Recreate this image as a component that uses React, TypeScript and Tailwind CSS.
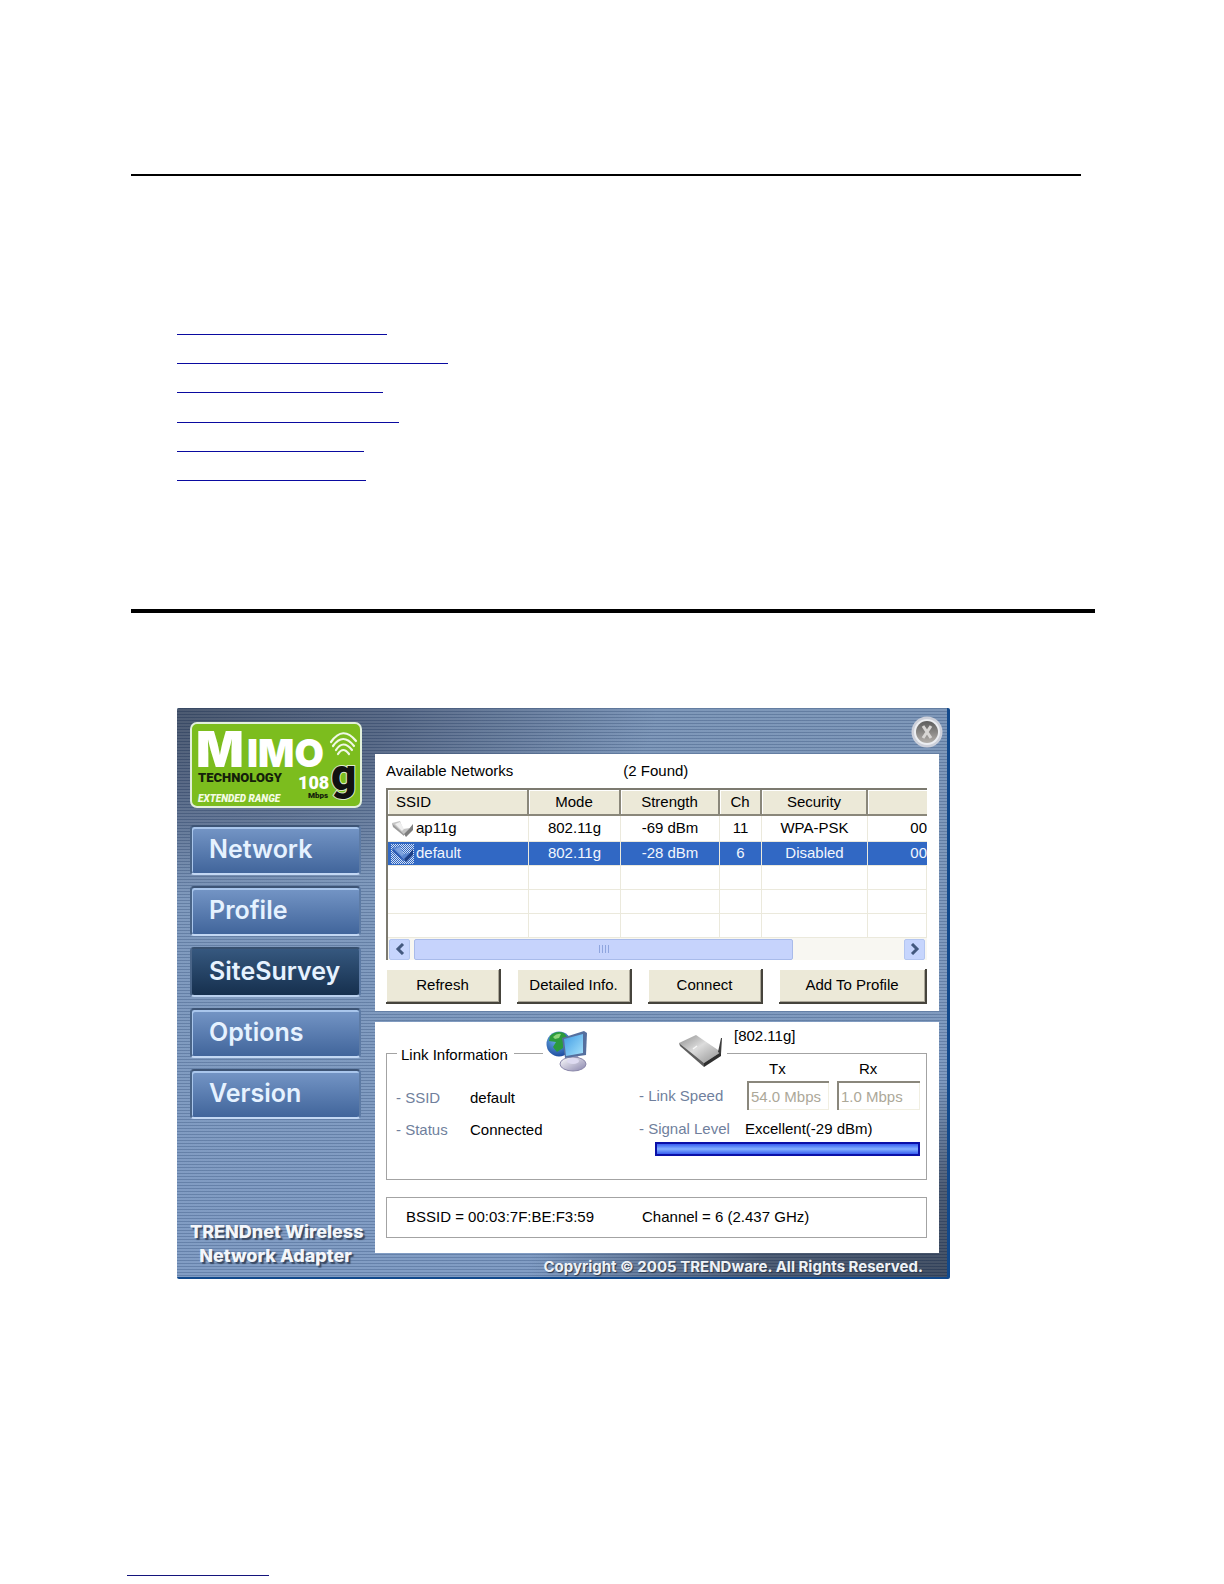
import React from "react";

const linkRows = [
  "w-[210px] h-[29px]",
  "w-[271px] h-[29px]",
  "w-[206px] h-[29px]",
  "w-[222px] h-[30px]",
  "w-[187px] h-[29px]",
  "w-[189px] h-[29px]",
];

const navItems = ["Network", "Profile", "SiteSurvey", "Options", "Version"];

const networks = [
  { ssid: "ap11g", mode: "802.11g", strength: "-69 dBm", ch: "11", security: "WPA-PSK", bssid: "00" },
  { ssid: "default", mode: "802.11g", strength: "-28 dBm", ch: "6", security: "Disabled", bssid: "00" },
];

function MimoLogo() {
  return (
    <svg viewBox="0 0 172 86" className="block h-[86px] w-[172px]" role="img" aria-label="MIMO Technology 108 Mbps g">
      <rect x="1" y="1" width="170" height="84" rx="6" fill="#7cbd1e" stroke="#e3f0dc" strokeWidth="2" />
      <g fontFamily="Inter, sans-serif" fontWeight="900" fill="#ffffff">
        <text x="6" y="45" fontSize="50">M</text>
        <text x="57" y="45" fontSize="38">IMO</text>
      </g>
      <g fontFamily="Roboto, sans-serif" fontWeight="900">
        <text x="8" y="60" fontSize="13" fill="#14200a">TECHNOLOGY</text>
        <text x="108" y="67" fontSize="18" fill="#ffffff">108</text>
        <text x="118" y="76" fontSize="8" fill="#14200a">Mbps</text>
        <text x="141" y="68" fontSize="44" fill="#111111" stroke="#dcebc8" strokeWidth="2" paintOrder="stroke">g</text>
      </g>
      <text x="8" y="80" fontFamily="Roboto, sans-serif" fontSize="10" fontWeight="900" fontStyle="italic" fill="#f4fbe4">
        EXTENDED RANGE
      </text>
      <g fill="none" stroke="#f1f8e6" strokeWidth="2.2" strokeLinecap="round">
        <path d="M141 20 Q153 3 166 19" />
        <path d="M143 24 Q153 10 164 24" />
        <path d="M146 28 Q153 17 162 28" />
        <path d="M148 32 Q153 24 159 32" />
      </g>
    </svg>
  );
}

function CardIcon({ selected }: { selected?: boolean }) {
  return (
    <svg viewBox="0 0 24 20" className="h-5 w-6 flex-none" aria-hidden="true">
      {selected && (
        <>
          <defs>
            <pattern id="dither" width="2" height="2" patternUnits="userSpaceOnUse">
              <rect width="2" height="2" fill="#3168c4" />
              <rect width="1" height="1" fill="#d5e0f2" />
              <rect x="1" y="1" width="1" height="1" fill="#d5e0f2" />
            </pattern>
          </defs>
          <rect width="23" height="20" fill="url(#dither)" />
        </>
      )}
      <path d="M1 4 L9 2 L12 10 L19 9 L14 16 Z" fill={selected ? "#5a86d0" : "#c4c4c4"} />
      <path d="M4 5 L9 3 L13 10 L11 12 Z" fill={selected ? "#7da2de" : "#efefef"} />
      <path d="M1 4 L13 15 L13 17 L2 8 Z" fill={selected ? "#2f5cb4" : "#9a9a9a"} />
      <path d="M13 15 L18 10 L22 5 L22 11 L15 18 Z" fill={selected ? "#1d3f86" : "#7d7d7d"} />
    </svg>
  );
}

function ComputerIcon() {
  return (
    <svg viewBox="0 0 42 42" className="h-[42px] w-[42px]" aria-hidden="true">
      <defs>
        <radialGradient id="globe" cx="0.4" cy="0.3" r="0.8">
          <stop offset="0" stopColor="#6fb6ea" />
          <stop offset="1" stopColor="#143f96" />
        </radialGradient>
        <linearGradient id="screen" x1="0" y1="0" x2="1" y2="1">
          <stop offset="0" stopColor="#3f9be4" />
          <stop offset="1" stopColor="#a6e2fb" />
        </linearGradient>
        <linearGradient id="stand" x1="0" y1="0" x2="1" y2="1">
          <stop offset="0" stopColor="#ffffff" />
          <stop offset="1" stopColor="#8884ac" />
        </linearGradient>
      </defs>
      <circle cx="13" cy="14" r="12.5" fill="url(#globe)" />
      <path d="M4 6 Q10 0 18 3 L22 8 L17 11 L17 18 L11 22 L7 17 L10 12 L3 11 Z" fill="#2c9a3c" />
      <path d="M7 7 Q11 3 15 4 L13 8 L9 9 Z" fill="#8ed47b" />
      <path d="M23 26 L32 26 L34 33 L20 33 Z" fill="#aaa7c8" />
      <ellipse cx="27" cy="34" rx="13" ry="7" fill="url(#stand)" stroke="#8b88aa" strokeWidth="1" />
      <ellipse cx="27" cy="31" rx="6" ry="3" fill="#dddaf0" />
      <path d="M16 8 L38 1 L41 3 L40 25 L19 28 Z" fill="#556f9e" />
      <path d="M18 9 L37 4 L37 23 L20 26 Z" fill="url(#screen)" />
    </svg>
  );
}

function RouterIcon() {
  return (
    <svg viewBox="0 0 46 34" className="h-[34px] w-[46px]" aria-hidden="true">
      <defs>
        <linearGradient id="case" x1="0" y1="0" x2="1" y2="1">
          <stop offset="0" stopColor="#8e8e8e" />
          <stop offset="0.45" stopColor="#dcdcdc" />
          <stop offset="1" stopColor="#8f8f8f" />
        </linearGradient>
      </defs>
      <path d="M1 9 L18 1 L43 18 L26 29 Z" fill="url(#case)" />
      <path d="M1 9 L26 29 L26 33 L2 12 Z" fill="#5e5e5e" />
      <path d="M26 29 L43 18 L43 22 L26 33 Z" fill="#2f2f2f" />
      <path d="M43 4 L44 4 L43 20 L40 18 Z" fill="#3c3c3c" />
      <path d="M15 15 L19 12" stroke="#f6f6f6" strokeWidth="1.5" />
    </svg>
  );
}

function GrayButton({ label, className }: { label: string; className: string }) {
  return (
    <button
      type="button"
      className={`h-[35px] border-r-2 border-b-2 border-[#46443c] bg-[#ece9d8] text-center shadow-[inset_1px_1px_0_#ffffff,inset_-1px_-1px_0_#aca899] ${className}`}
    >
      {label}
    </button>
  );
}

function ScrollArrow({ direction }: { direction: "left" | "right" }) {
  return (
    <button
      type="button"
      aria-label={`Scroll ${direction}`}
      className="flex h-[21px] w-[21px] flex-none items-center justify-center rounded-xs border border-[#b4c6f0] bg-[#c6d5fd]"
    >
      <svg viewBox="0 0 10 12" className="h-3 w-[10px]" aria-hidden="true">
        <path d={direction === "left" ? "M8 1 L3 6 L8 11" : "M2 1 L7 6 L2 11"} fill="none" stroke="#43597f" strokeWidth="3" />
      </svg>
    </button>
  );
}

function NetworkTable() {
  const head =
    "h-[26px] border-r-2 border-b-2 border-[#8a877a] bg-[#ece9d8] font-normal shadow-[inset_1px_1px_0_#ffffff]";
  const cell = "border-r border-b border-[#ebe9dc] text-center";
  return (
    <div className="mt-[7px] overflow-hidden border-t-2 border-l-2 border-[#7c7a70]">
      <table className="w-full table-fixed border-separate border-spacing-0">
        <colgroup>
          <col className="w-[141px]" />
          <col className="w-[92px]" />
          <col className="w-[99px]" />
          <col className="w-[42px]" />
          <col className="w-[106px]" />
          <col />
        </colgroup>
        <thead>
          <tr>
            <th className={`${head} pl-2 text-left`}>SSID</th>
            <th className={head}>Mode</th>
            <th className={head}>Strength</th>
            <th className={head}>Ch</th>
            <th className={head}>Security</th>
            <th className="h-[26px] border-b-2 border-[#8a877a] bg-[#ece9d8] shadow-[inset_1px_1px_0_#ffffff]" />
          </tr>
        </thead>
        <tbody>
          {networks.map((n, i) => (
            <tr key={n.ssid} className={i === 1 ? "h-6 bg-[#3168c4] text-[#f2f6fd]" : "h-[26px]"}>
              <td className="border-r border-b border-[#ebe9dc]">
                <span className="flex h-[23px] items-center gap-[1px] pl-[3px]">
                  <CardIcon selected={i === 1} />
                  {n.ssid}
                </span>
              </td>
              <td className={cell}>{n.mode}</td>
              <td className={cell}>{n.strength}</td>
              <td className={cell}>{n.ch}</td>
              <td className={cell}>{n.security}</td>
              <td className="border-b border-[#ebe9dc] text-right">{n.bssid}</td>
            </tr>
          ))}
          {[0, 1, 2].map((r) => (
            <tr key={r}>
              {[0, 1, 2, 3, 4, 5].map((c) => (
                <td key={c} className="h-6 border-r border-b border-[#ebe9dc]" />
              ))}
            </tr>
          ))}
        </tbody>
      </table>
      <div className="flex h-[22px] items-center gap-1 bg-[#f8f7f2] pr-[2px] pl-[1px]">
        <ScrollArrow direction="left" />
        <div className="flex-1">
          <div className="flex h-[21px] w-[78%] items-center justify-center gap-[2px] rounded-xs border border-[#a9bbea] bg-[#c6d3fc]">
            {[0, 1, 2, 3].map((k) => (
              <span key={k} className="h-2 w-px bg-[#8fa5de]" />
            ))}
          </div>
        </div>
        <ScrollArrow direction="right" />
      </div>
    </div>
  );
}

function LinkInformation() {
  const field =
    "h-[29px] w-full border-t-2 border-l-2 border-[#8a877c] bg-white pl-[2px] text-[#aca899] shadow-[inset_-1px_-1px_0_#f1efe2]";
  return (
    <section className="relative flex h-[127px] justify-between border border-[#a3a3a3]">
      <h2 className="absolute -top-[9px] left-[10px] bg-white px-1 leading-5">Link Information</h2>
      <div className="absolute top-0 left-[119px] -mt-px h-px w-2 bg-white" />
      <div className="absolute -top-6 left-[156px] flex w-[184px] items-center justify-between bg-white px-[3px]">
        <ComputerIcon />
        <RouterIcon />
      </div>
      <div className="absolute -top-7 left-[347px] leading-5">[802.11g]</div>

      <dl className="grid grid-cols-[74px_auto] content-start gap-y-3 pt-[34px] pl-[9px] leading-5">
        <dt className="text-[#707f9d]">- SSID</dt>
        <dd>default</dd>
        <dt className="text-[#707f9d]">- Status</dt>
        <dd>Connected</dd>
      </dl>

      <div className="w-[287px] pt-[5px] pr-[6px] leading-5">
        <div className="grid grid-cols-[100px_82px_83px] items-center gap-x-2 gap-y-[2px]">
          <span />
          <label htmlFor="tx" className="pl-[22px]">Tx</label>
          <label htmlFor="rx" className="pl-[22px]">Rx</label>
          <span className="whitespace-nowrap text-[#707f9d]">- Link Speed</span>
          <input id="tx" disabled defaultValue="54.0 Mbps" className={field} />
          <input id="rx" disabled defaultValue="1.0 Mbps" className={field} />
        </div>
        <div className="mt-[9px] flex">
          <span className="w-[106px] text-[#707f9d]">- Signal Level</span>
          <span>Excellent(-29 dBm)</span>
        </div>
        <div className="mt-[3px] ml-4 h-[14px] border-2 border-[#0a10a8] bg-linear-to-b from-[#3a5cf0] via-[#86b0ff] to-[#3a5cf0]" />
      </div>
    </section>
  );
}

function AdapterWindow() {
  return (
    <div className="flex w-full max-w-[773px] rounded-xs border-r-3 border-b-2 border-[#11498c] bg-[repeating-linear-gradient(to_bottom,rgba(30,50,85,0.2)_0px,rgba(30,50,85,0.2)_1px,rgba(255,255,255,0.07)_1px,rgba(255,255,255,0.07)_3px),radial-gradient(ellipse_480px_190px_at_0%_0%,#3f4e66_0%,#4f6180_45%,transparent_100%),radial-gradient(ellipse_420px_200px_at_100%_100%,#36445a_0%,#43536c_45%,transparent_100%),linear-gradient(#7590b4,#7896c0)] font-['Liberation_Sans',Arial,sans-serif] text-[15px] text-black">
      <aside className="flex w-[198px] flex-none flex-col pt-[14px] pb-[9px] pl-[13px] font-['Inter',sans-serif]">
        <MimoLogo />
        <nav className="mt-[17px] flex w-[171px] flex-col gap-[11px]">
          {navItems.map((item) => (
            <button
              key={item}
              type="button"
              className={
                item === "SiteSurvey"
                  ? "h-[50px] rounded-sm border-2 border-t-[#37506f] border-r-[#5d7ba5] border-b-[#b9d0ee] border-l-[#4a6588] bg-linear-to-b from-[#36587f] to-[#16304e] pl-[17px] text-left text-[25px] font-semibold text-[#e6f2ff]"
                  : "h-[50px] rounded-sm border-2 border-t-[#3d5475] border-r-[#5d7ba5] border-b-[#c3d8f4] border-l-[#4a6588] bg-linear-to-b from-[#7596c6] to-[#41659b] pl-[17px] text-left text-[25px] font-semibold text-[#e6f2ff] shadow-[inset_1px_2px_0_#a9c6ec]"
              }
            >
              {item}
            </button>
          ))}
        </nav>
        <p className="mt-auto w-[171px] self-start text-center text-[18px] leading-6 font-extrabold whitespace-nowrap text-[#f3f6fa] [text-shadow:2px_2px_1px_#3a4a63]">
          TRENDnet Wireless
          <br />
          Network Adapter
        </p>
      </aside>

      <main className="flex min-w-0 flex-1 flex-col">
        <div className="flex h-[46px] items-center justify-end pt-[2px] pr-1">
          <button type="button" aria-label="Close" className="h-8 w-8">
            <svg viewBox="0 0 32 32" className="h-8 w-8" aria-hidden="true">
              <defs>
                <linearGradient id="knob" x1="0" y1="0" x2="0" y2="1">
                  <stop offset="0" stopColor="#5c5c5c" />
                  <stop offset="1" stopColor="#b4b0ac" />
                </linearGradient>
              </defs>
              <circle cx="16" cy="16" r="15.5" fill="#cdd0da" />
              <circle cx="16" cy="16" r="13" fill="#eceef2" />
              <circle cx="16" cy="16" r="11" fill="url(#knob)" />
              <path d="M12 10 L20 22 M20 10 L12 22" stroke="#d8d6d4" strokeWidth="3" />
            </svg>
          </button>
        </div>

        <section className="mr-2 bg-white pt-[7px] pr-3 pb-[7px] pl-[11px]">
          <div className="flex gap-[110px] leading-5">
            <h1>Available Networks</h1>
            <span>(2 Found)</span>
          </div>
          <NetworkTable />
          <div className="mt-[9px] flex justify-between">
            <GrayButton label="Refresh" className="w-[115px]" />
            <GrayButton label="Detailed Info." className="w-[115px]" />
            <GrayButton label="Connect" className="w-[115px]" />
            <GrayButton label="Add To Profile" className="w-[148px]" />
          </div>
        </section>

        <section className="mt-[11px] mr-2 bg-white pt-[31px] pr-3 pb-[15px] pl-[11px]">
          <LinkInformation />
          <div className="mt-[17px] flex h-[41px] items-center gap-12 border border-[#a3a3a3] pl-[19px]">
            <span>BSSID = 00:03:7F:BE:F3:59</span>
            <span>Channel = 6 (2.437 GHz)</span>
          </div>
        </section>

        <footer className="h-6 pr-6 text-right font-['Inter',sans-serif] text-[15px] leading-7 font-bold whitespace-nowrap text-[#eef2f7] [text-shadow:1px_1px_1px_#2c394d]">
          Copyright © 2005 TRENDware. All Rights Reserved.
        </footer>
      </main>
    </div>
  );
}

export default function App() {
  return (
    <div className="bg-white pt-[174px] pb-2 pl-[127px]">
      <hr className="mr-[143px] ml-1 border-t-2 border-black" />
      <ul className="mt-[130px] ml-[50px]">
        {linkRows.map((row, i) => (
          <li key={row}>
            <a href="#" aria-label={`Section ${i + 1}`} className={`block border-b border-[#0a0aa0] ${row}`} />
          </li>
        ))}
      </ul>
      <hr className="mt-32 mr-[129px] ml-1 border-t-4 border-black" />
      <div className="mt-[95px] ml-[50px]">
        <AdapterWindow />
      </div>
      <a href="#" aria-label="Footer" className="mt-[296px] block w-[142px] border-b border-[#14147c]" />
    </div>
  );
}
